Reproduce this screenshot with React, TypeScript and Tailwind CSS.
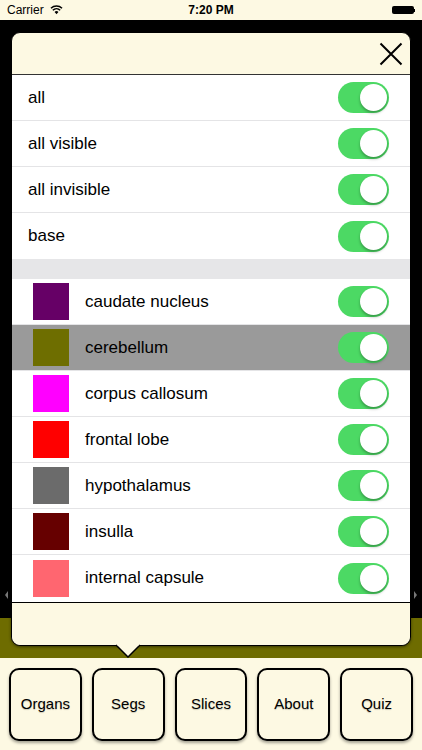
import type { ReactNode } from "react";

const controls = ["all", "all visible", "all invisible", "base"];

const organs = [
  { name: "caudate nucleus", color: "#660066" },
  { name: "cerebellum", color: "#6e6e00", selected: true },
  { name: "corpus callosum", color: "#ff00ff" },
  { name: "frontal lobe", color: "#ff0000" },
  { name: "hypothalamus", color: "#6b6b6b" },
  { name: "insulla", color: "#660000" },
  { name: "internal capsule", color: "#ff6670" },
];

const tabs = ["Organs", "Segs", "Slices", "About", "Quiz"];

function Toggle() {
  return (
    <div className="relative h-[31px] w-[51px] shrink-0 rounded-full bg-[#4cd964]">
      <div className="absolute right-[2px] top-[2px] h-[27px] w-[27px] rounded-full bg-white shadow-[0_2px_3px_rgba(0,0,0,0.3)]" />
    </div>
  );
}

function Row({ children, selected, last }: { children: ReactNode; selected?: boolean; last?: boolean }) {
  return (
    <div
      className={`flex h-[46px] items-center justify-between pr-[21px] ${
        selected ? "bg-[#9a9a9a]" : "bg-white"
      } ${last ? "" : "border-b border-[#e4e4e6]"}`}
    >
      {children}
      <Toggle />
    </div>
  );
}

function StatusBar() {
  return (
    <div className="relative flex h-[20px] items-center bg-[#fdf9e3] px-[7px] text-[12px] text-black">
      <span>Carrier</span>
      <svg className="ml-[6px]" width="13" height="10" viewBox="0 0 12 9">
        <path d="M6 8.5 L4.2 6.4 A2.6 2.6 0 0 1 7.8 6.4 Z" fill="black" />
        <path d="M2.6 4.8 A4.9 4.9 0 0 1 9.4 4.8" stroke="black" strokeWidth="1.4" fill="none" />
        <path d="M0.9 2.9 A7.4 7.4 0 0 1 11.1 2.9" stroke="black" strokeWidth="1.4" fill="none" />
      </svg>
      <span className="absolute left-1/2 -translate-x-1/2 font-bold">7:20 PM</span>
      <div className="ml-auto flex items-center">
        <div className="h-[8px] w-[22px] rounded-[2px] bg-black" />
        <div className="h-[3px] w-[1.5px] bg-black" />
      </div>
    </div>
  );
}

export default function App() {
  return (
    <div
      className="relative flex h-[750px] w-[422px] flex-col overflow-hidden bg-[#fdf9e3] text-black"
      style={{ fontFamily: '"Liberation Sans", Arial, sans-serif' }}
    >
      <StatusBar />
      <div className="h-[598px] bg-black" />
      <div className="h-[40px] bg-[#6e6c00]" />
      <div className="flex gap-[10px] px-[9px] pt-[10px]">
        {tabs.map((t) => (
          <button
            key={t}
            className="flex h-[73px] w-[73px] items-center justify-center rounded-[10px] border-2 border-black bg-[#fdf9e3] text-[15px] shadow-[0_2px_3px_rgba(0,0,0,0.35)] [text-shadow:0_1px_1px_rgba(0,0,0,0.2)]"
          >
            {t}
          </button>
        ))}
      </div>

      {/* scroll edge hints behind the popover */}
      <div className="absolute left-[5px] top-[591px] h-0 w-0 border-y-[4px] border-r-[3px] border-y-transparent border-r-[#777]" />
      <div className="absolute right-[5px] top-[591px] h-0 w-0 border-y-[4px] border-l-[3px] border-y-transparent border-l-[#777]" />

      {/* popover */}
      <div className="absolute left-[11px] top-[32px] flex h-[614px] w-[400px] flex-col rounded-[9px] border border-black bg-[#fdf9e3] shadow-[0_1px_3px_rgba(0,0,0,0.5)]">
        <div className="flex h-[42px] items-center justify-end border-b border-[#333] pr-[7px]">
          <svg width="24" height="24" viewBox="0 0 24 24">
            <path d="M1.5 1.5 L22.5 22.5 M22.5 1.5 L1.5 22.5" stroke="black" strokeWidth="2" />
          </svg>
        </div>
        <div className="flex flex-1 flex-col bg-white">
          {controls.map((c, i) => (
            <Row key={c} last={i === controls.length - 1}>
              <span className="pl-[16px] text-[17px]">{c}</span>
            </Row>
          ))}
          <div className="h-[20px] bg-[#e6e6e8]" />
          {organs.map((o, i) => (
            <Row key={o.name} selected={o.selected} last={i === organs.length - 1}>
              <div className="flex items-center pl-[21px]">
                <div className="h-[37px] w-[36px]" style={{ backgroundColor: o.color }} />
                <span className="pl-[16px] text-[17px]">{o.name}</span>
              </div>
            </Row>
          ))}
        </div>
        <div className="h-[43px] rounded-b-[9px] border-t-[1.5px] border-black bg-[#fdf9e3]" />
      </div>
      <svg className="absolute left-[116px] top-[644px]" width="24" height="14" viewBox="0 0 24 14">
        <path d="M0 1 L12 13 L24 1" fill="#fdf9e3" stroke="black" strokeWidth="1.5" />
        <rect x="1.5" y="0" width="21" height="1.6" fill="#fdf9e3" />
      </svg>
    </div>
  );
}
